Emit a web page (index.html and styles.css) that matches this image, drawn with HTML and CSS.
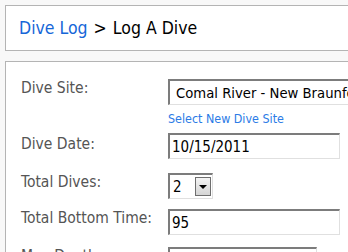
FILE: index.html
```html
<!DOCTYPE html>
<html lang="en">
<head>
  <meta charset="UTF-8">
  <title>Log A Dive</title>
  <link rel="stylesheet" href="styles.css">
</head>
<body>
  <div class="page">
    <div class="crumbs">
      <a href="#" class="crumb-link">Dive Log</a>
      <span class="crumb-sep">&gt;</span>
      <span class="crumb-current">Log A Dive</span>
    </div>

    <div class="panel">
      <div class="row row-site">
        <label class="label">Dive Site:</label>
        <div class="field">
          <div class="select select-site">Comal River - New Braunfels, TX</div>
          <a href="#" class="small-link">Select New Dive Site</a>
        </div>
      </div>

      <div class="row row-date">
        <label class="label label-date">Dive Date:</label>
        <input type="text" class="text-input" value="10/15/2011">
      </div>

      <div class="row row-dives">
        <label class="label">Total Dives:</label>
        <div class="select select-small">
          <span class="select-value">2</span>
          <span class="select-button"><span class="arrow"></span></span>
        </div>
      </div>

      <div class="row row-time">
        <label class="label">Total Bottom Time:</label>
        <input type="text" class="text-input" value="95">
      </div>

      <div class="row">
        <label class="label">Max Depth:</label>
        <input type="text" class="text-input text-input-short" value="">
      </div>
    </div>
  </div>
</body>
</html>
```

FILE: styles.css
```css
body {
  margin: 0;
  background-color: #f8f8f8;
  font-family: "DejaVu Sans Condensed", "DejaVu Sans", sans-serif;
  font-stretch: condensed;
  overflow: hidden;
}
.page {
  width: 440px;
  padding: 5px;
}
.crumbs {
  height: 44px;
  padding-left: 13px;
  display: flex;
  align-items: center;
  gap: 6px;
  background-color: #fff;
  border: 1px solid #b4b4b4;
  font-size: 17.5px;
  color: #000;
}
.crumb-link {
  color: #1566d8;
  text-decoration: none;
}
.panel {
  margin-top: 10px;
  padding: 17px 0 40px 15px;
  background-color: #fff;
  border: 1px solid #b4b4b4;
}
.row {
  display: grid;
  grid-template-columns: 147px 1fr;
  align-items: start;
  margin-bottom: 12px;
}
.row-site { margin-bottom: 7px; }
.row-date { margin-bottom: 14px; }
.row-dives { margin-bottom: 10px; }
.row-time { margin-bottom: 12px; }
.label {
  font-size: 15.5px;
  line-height: 18px;
  color: #555;
}
.label-date {
  padding-top: 2px;
}
.select,
.text-input {
  box-sizing: border-box;
  height: 26px;
  border-style: solid;
  border-width: 2px 1px 1px 2px;
  border-color: #7c7c7c #e0e0e0 #e0e0e0 #7c7c7c;
  background-color: #fff;
  font-family: inherit;
  font-stretch: condensed;
  font-size: 15px;
  color: #000;
}
.select-site {
  width: 260px;
  padding-left: 6px;
  line-height: 23px;
  font-size: 14.7px;
  white-space: nowrap;
  overflow: hidden;
}
.small-link {
  display: block;
  margin-top: 7px;
  font-size: 12.4px;
  line-height: 14px;
  color: #2b7be6;
  text-decoration: none;
}
.text-input {
  width: 172px;
  padding: 0 0 0 2px;
  outline: none;
}
.text-input-short {
  width: 149px;
}
.select-small {
  width: 45px;
  display: flex;
  align-items: center;
  justify-content: space-between;
  padding: 0 1px 0 3px;
}
.select-value {
  line-height: 22px;
}
.select-button {
  width: 16px;
  height: 19px;
  box-sizing: border-box;
  border: 1px solid #6e6e6e;
  background: linear-gradient(#f4f4f4, #d4d4d4);
  display: flex;
  align-items: center;
  justify-content: center;
}
.arrow {
  width: 0;
  height: 0;
  border-left: 4px solid transparent;
  border-right: 4px solid transparent;
  border-top: 4px solid #000;
}
```
